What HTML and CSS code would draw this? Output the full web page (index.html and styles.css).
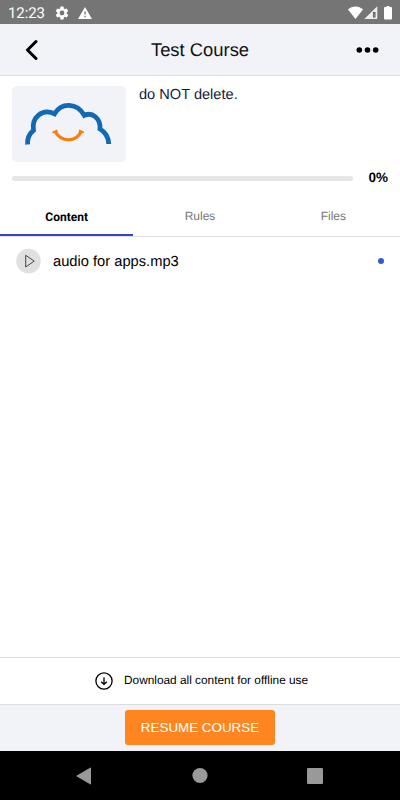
FILE: index.html
```html
<!DOCTYPE html>
<html lang="en">
<head>
<meta charset="utf-8">
<title>Test Course</title>
<link rel="stylesheet" href="styles.css">
</head>
<body>
<div class="screen">
  <div class="status">
    <span class="time">12:23</span>
    <svg class="gear" width="16" height="16" viewBox="0 0 24 24"><path fill="#fff" d="M19.14 12.94c.04-.3.06-.61.06-.94s-.02-.64-.07-.94l2.03-1.58a.5.5 0 0 0 .12-.61l-1.92-3.32a.49.49 0 0 0-.59-.22l-2.39.96a7 7 0 0 0-1.62-.94l-.36-2.54a.48.48 0 0 0-.48-.41h-3.84a.47.47 0 0 0-.47.41l-.36 2.54c-.59.24-1.13.57-1.62.94l-2.39-.96a.48.48 0 0 0-.59.22L2.74 8.87a.47.47 0 0 0 .12.61l2.03 1.58c-.05.3-.09.63-.09.94s.02.64.07.94l-2.03 1.58a.5.5 0 0 0-.12.61l1.92 3.32c.12.22.37.29.59.22l2.39-.96c.5.38 1.03.7 1.62.94l.36 2.54c.05.24.24.41.48.41h3.84c.24 0 .44-.17.47-.41l.36-2.54a7 7 0 0 0 1.62-.94l2.39.96c.22.08.47 0 .59-.22l1.92-3.32a.47.47 0 0 0-.12-.61zM12 15.6a3.6 3.6 0 1 1 0-7.2 3.6 3.6 0 0 1 0 7.2z"/></svg>
    <svg class="warn" width="14" height="12" viewBox="0 0 14 12"><path fill="#fff" fill-rule="evenodd" d="M7 0l7 12H0zM6.300 4.500v3h1.400v-3zM6.300 8.800v1.400h1.400V8.800z"/></svg>
    <svg class="signals" width="45" height="14" viewBox="0 0 45 14"><path fill="#fff" d="M0 3.500C4-.6 11-.6 15 3.500L7.500 13z"/><path fill="#eee" d="M29.300 .3V13H16.300z"/><path fill="#555" d="M25 6h2.500v5.500H25z"/><path fill="#bbb" d="M25.800 7h.7v3.700h-.7z"/><path fill="#fff" d="M38.500 0h3v1h1.500q1 0 1 1v10.500q0 1-1 1h-6q-1 0-1-1V2q0-1 1-1h1.500z"/></svg>
  </div>
  <header class="bar">
    <svg class="back" width="14" height="22" viewBox="0 0 14 22"><path d="M12 2.500L3.500 11l8.500 8.500" fill="none" stroke="#000" stroke-width="3" stroke-linecap="round" stroke-linejoin="round"/></svg>
    <h1 class="title">Test Course</h1>
    <svg class="more" width="23" height="6" viewBox="0 0 23 6"><circle cx="3.300" cy="3" r="2.800"/><circle cx="11.500" cy="3" r="2.800"/><circle cx="19.700" cy="3" r="2.800"/></svg>
  </header>
  <section class="intro">
    <div class="thumb">
      <svg width="114" height="76" viewBox="0 0 114 76"><path d="M15.600 58.500Q15 49.500 21.500 44.300C19.500 31.500 30 22 42.500 27.800C49.500 16 65 16.500 72.300 29.300C80.500 25.500 89 33 88 43Q96.500 48 96.700 58" fill="none" stroke="#1368b5" stroke-width="4.800"/><path d="M43.300 45.500C49 56.500 64 56.500 69.200 45.500" fill="none" stroke="#fb7d0b" stroke-width="3.200"/><path d="M40.500 46.700L45.500 44.500M67 44.500L71.800 46.700" fill="none" stroke="#fb7d0b" stroke-width="2"/></svg>
    </div>
    <p class="desc">do NOT delete.</p>
  </section>
  <div class="progress"><div class="track"></div><span class="pct">0%</span></div>
  <nav class="tabs"><div class="tab active"><span>Content</span></div><div class="tab"><span>Rules</span></div><div class="tab"><span>Files</span></div></nav>
  <main class="list">
    <div class="item">
      <svg width="26" height="26" viewBox="0 0 26 26"><circle cx="12.500" cy="13" r="12.300" fill="#e0e0e0"/><path d="M9.700 7.300V19L18.200 13.100z" fill="none" stroke="#333" stroke-width=".9" stroke-linejoin="round"/></svg>
      <span class="name">audio for apps.mp3</span>
      <i class="dot"></i>
    </div>
  </main>
  <div class="download">
    <svg width="18" height="18" viewBox="0 0 18 18" fill="none" stroke="#000" stroke-width="1.300"><circle cx="9" cy="9" r="8.100"/><path d="M9 5.300v7M6.200 9.700L9 12.400l2.800-2.700"/></svg>
    <span class="dl">Download all content for offline use</span>
  </div>
  <footer class="foot"><button class="resume"><span>RESUME COURSE</span></button></footer>
  <div class="android">
    <svg width="400" height="49" viewBox="0 0 400 49" fill="#999"><path d="M76 25L90.500 16.500Q91 16.500 91 17V33Q91 33.700 90.500 33.400z"/><circle cx="200" cy="24.500" r="7.600"/><rect x="307" y="17" width="16" height="16" rx="1.200"/></svg>
  </div>
</div>
</body>
</html>
```
FILE: styles.css
```css
* { box-sizing: border-box; }
body { margin: 0; font-family: "Liberation Sans", Arial, sans-serif; color: #000; background: #fff; text-rendering: geometricPrecision; }
svg { display: block; flex: none; }
.screen { width: 400px; height: 800px; display: flex; flex-direction: column; overflow: hidden; }
.screen > * { flex: none; }
.status { height: 24px; background: #757575; display: flex; align-items: center; padding: 1px 7px 0 8px; }
.time { font: 15px/22px Roboto, sans-serif; color: #fff; width: 46px; white-space: nowrap; letter-spacing: -.1px; }
.warn { margin-left: 8px; }
.signals { margin-left: auto; }
.bar { height: 52px; background: #f2f3f8; border-bottom: 1px solid #dfe0e3; display: flex; align-items: center; padding: 0 21px 0 24px; }
.title { flex: 1; margin: 0; font-size: 18.4px; font-weight: 400; text-align: center; line-height: 24px; padding-left: 6px; color: #111; }
.intro { display: flex; padding: 10px 12px 0; height: 89px; }
.thumb { width: 114px; height: 76px; border-radius: 5px; background: #f2f3f8; }
.desc { margin: 0 0 0 13px; font-size: 14.6px; line-height: 18px; color: #121c3a; }
.progress { height: 25px; display: flex; align-items: center; justify-content: space-between; padding: 0 12px; }
.track { width: 341px; height: 5px; border-radius: 3px; background: #e6e6e6; margin-top: 1px; }
.pct { font-size: 13.5px; font-weight: 700; line-height: 16px; padding-top: 1px; }
.tabs { height: 47px; display: flex; border-bottom: 1px solid #dfdfdf; }
.tab { flex: 1; height: 46px; padding-top: 18px; font-size: 12px; line-height: 16px; text-align: center; color: #777; }
.active { padding-top: 19px; color: #000; font-family: Roboto, sans-serif; font-weight: 700; border-bottom: 2px solid #3046cf; }
.list { flex: 1 1 auto; }
.item { display: flex; align-items: center; height: 48px; padding: 0 16px; }
.name { margin-left: 11px; font-size: 14.7px; line-height: 20px; padding-top: 2px; }
.dot { width: 6px; height: 6px; border-radius: 50%; background: #3158da; margin-left: auto; }
.download { height: 47px; border-top: 1px solid #dfdfdf; display: flex; align-items: center; padding: 0 0 1px 95px; }
.dl { margin-left: 11px; font-size: 11.85px; line-height: 16px; white-space: nowrap; padding-bottom: 1px; }
.foot { height: 47px; background: #f2f3f8; border-top: 1px solid #dcdddf; display: flex; justify-content: center; align-items: center; padding-bottom: 2px; }
.resume { width: 150px; height: 35px; border: 0; border-radius: 3px; background: #ff8520; color: #fff; padding: 1px 0 0; font: 13.4px/20px "Liberation Sans", Arial, sans-serif; white-space: nowrap; }
.android { height: 49px; background: #000; }
```
